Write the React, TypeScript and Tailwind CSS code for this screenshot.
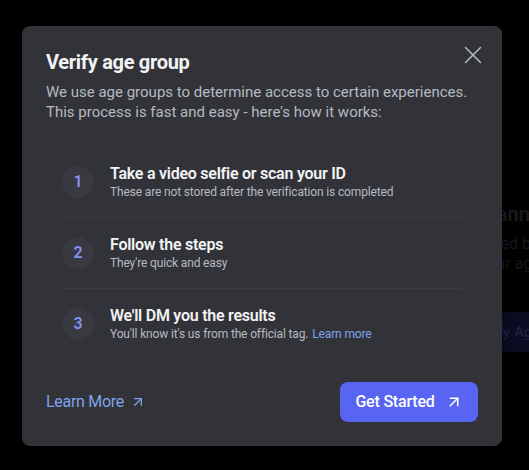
import { X, ArrowUpRight } from 'lucide-react'

const steps = [
  {
    title: 'Take a video selfie or scan your ID',
    body: 'These are not stored after the verification is completed'
  },
  { title: 'Follow the steps', body: "They're quick and easy" },
  { title: "We'll DM you the results", body: "You'll know it's us from the official tag.", link: 'Learn more' }
]

function App() {
  return (
    <div
      className="relative h-[470px] w-[529px] overflow-hidden bg-black"
      style={{ fontFamily: 'Roboto, "Noto Sans", sans-serif' }}
    >
      {/* page behind the overlay */}
      <div className="flex flex-col pl-[474px] pt-[202px] whitespace-nowrap">
        <div className="text-[20px] font-bold leading-6 text-[#18181a]">Scanning</div>
        <div className="ml-[8px] mt-2 text-[16px] leading-5 text-[#161618]">Used by</div>
        <div className="ml-[6px] text-[16px] leading-5 text-[#161618]">your age</div>
        <div className="ml-[-20px] mt-[38px] flex h-10 w-[140px] items-center rounded-lg bg-[#0b0b22] pl-[17px] text-[15px] font-medium text-[#1f1f40]">
          Verify Age
        </div>
      </div>

      <div className="absolute left-[22px] top-[26px] flex w-[480px] flex-col rounded-lg bg-[#323339] px-6 pt-6 pb-6 shadow-lg">
        <button type="button" aria-label="Close" className="absolute right-[14px] top-[14px] text-[#b5bac1]">
          <X size={30} strokeWidth={1.2} />
        </button>
        <h1 className="text-[20px] font-bold leading-6 tracking-[-0.3px] text-[#f2f3f5]">Verify age group</h1>
        <p className="mt-2 text-[15px] leading-5 text-[#b5bac1]">
          We use age groups to determine access to certain experiences.
          <br />
          This process is fast and easy - here's how it works:
        </p>

        <ul className="mx-4 mt-[25px] flex flex-col">
          {steps.map((step, i) => (
            <li
              key={step.title}
              className={`flex items-center gap-4 py-[17px] ${i > 0 ? 'border-t border-[#3b3c42]' : ''}`}
            >
              <div className="flex h-8 w-8 shrink-0 items-center justify-center rounded-full bg-[#393a41] text-[16px] font-semibold text-[#8590f6]">
                {i + 1}
              </div>
              <div className="flex flex-col">
                <span className="text-[16px] font-semibold leading-5 tracking-[-0.25px] text-[#f2f3f5]">
                  {step.title}
                </span>
                <span className="text-[12px] leading-4 tracking-[-0.15px] text-[#b5bac1]">
                  {step.body}
                  {step.link && <span className="ml-1 text-[#7fa4f1]">{step.link}</span>}
                </span>
              </div>
            </li>
          ))}
        </ul>

        <div className="mt-[23px] flex items-center justify-between">
          <a className="flex items-center gap-1.5 text-[16px] tracking-[-0.3px] text-[#7fa2ea]">
            Learn More
            <ArrowUpRight size={16} strokeWidth={2} />
          </a>
          <button
            type="button"
            className="flex h-10 w-[138px] items-center justify-center gap-2.5 rounded-lg bg-[#5865f2] text-[16px] font-medium tracking-[-0.2px] text-white"
          >
            Get Started
            <ArrowUpRight size={18} strokeWidth={2} />
          </button>
        </div>
      </div>
    </div>
  )
}

export default App
